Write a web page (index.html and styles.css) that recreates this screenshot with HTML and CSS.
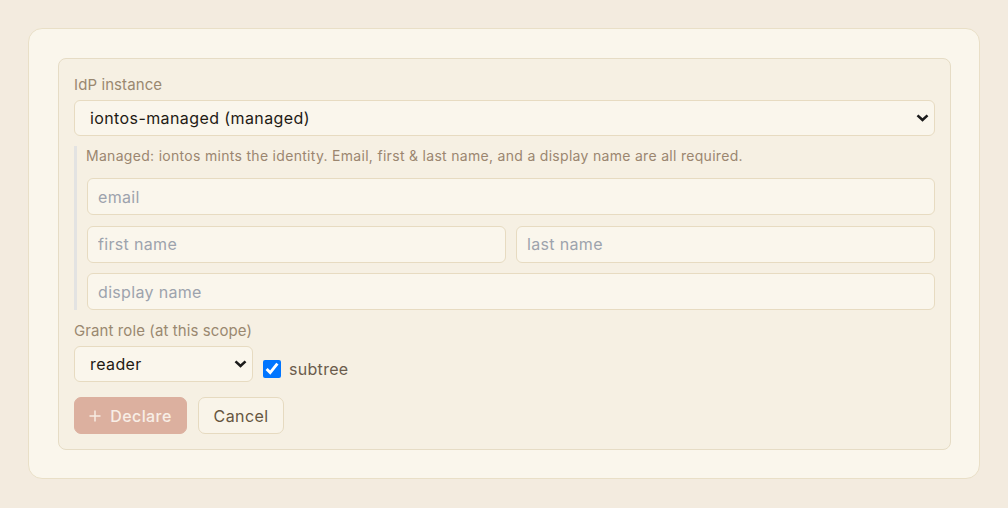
FILE: index.html
```html
<!DOCTYPE html>
<html lang="en">
<head>
<meta charset="utf-8">
<link rel="stylesheet" href="styles.css">
</head>
<body>
<div class="page">
  <div class="card">
    <div class="panel">
      <label class="label">IdP instance</label>
      <div class="select-wrap">
        <select class="select">
          <option>iontos-managed (managed)</option>
        </select>
        <svg class="chevron" width="13" height="8" viewBox="0 0 13 8" aria-hidden="true"><polyline points="1.5,1.4 6.5,6 11.5,1.4" fill="none" stroke="#1b1b1b" stroke-width="2.6"/></svg>
      </div>
      <div class="note">
        <p class="note-text">Managed: iontos mints the identity. Email, first &amp; last name, and a display name are all required.</p>
        <input class="input" type="text" placeholder="email">
        <div class="row">
          <input class="input" type="text" placeholder="first name">
          <input class="input" type="text" placeholder="last name">
        </div>
        <input class="input" type="text" placeholder="display name">
      </div>
      <label class="label label-role">Grant role (at this scope)</label>
      <div class="role-row">
        <div class="select-wrap select-wrap-role">
          <select class="select">
            <option>reader</option>
          </select>
          <svg class="chevron" width="13" height="8" viewBox="0 0 13 8" aria-hidden="true"><polyline points="1.5,1.4 6.5,6 11.5,1.4" fill="none" stroke="#1b1b1b" stroke-width="2.6"/></svg>
        </div>
        <label class="check"><input type="checkbox" checked> subtree</label>
      </div>
      <div class="actions">
        <button class="btn btn-primary" type="button"><svg class="plus" width="12" height="12" viewBox="0 0 12 12" aria-hidden="true"><path d="M6 0.5V11.5M0.5 6H11.5" stroke="#f7ece3" stroke-width="1.5" fill="none"/></svg>Declare</button>
        <button class="btn btn-secondary" type="button">Cancel</button>
      </div>
    </div>
  </div>
</div>
</body>
</html>
```
FILE: styles.css
```css
* { box-sizing: border-box; }
html, body { margin: 0; padding: 0; }
body {
  background: #f3ebdf;
  font-family: Inter, "Noto Sans", sans-serif;
  color: #1f1a14;
}
.page { padding: 28px; }
.card {
  background: #faf6ec;
  border: 1px solid #e9dfc7;
  border-radius: 14px;
  padding: 29px 28px 28px 29px;
}
.panel {
  background: #f6f0e3;
  border: 1px solid #e6dcc5;
  border-radius: 8px;
  padding: 16px 15px 15px 15px;
  display: flex;
  flex-direction: column;
}
.label {
  font-size: 15px;
  letter-spacing: 0.1px;
  line-height: 20px;
  color: #9a8870;
  margin-bottom: 5px;
}
.label-role { margin-top: 11px; }
.select-wrap { position: relative; height: 36px; }
.select-wrap-role { width: 179px; }
.select {
  -webkit-appearance: none;
  appearance: none;
  display: block;
  width: 100%;
  height: 36px;
  font-family: Inter, "Noto Sans", sans-serif;
  font-size: 16px;
  letter-spacing: 0.4px;
  color: #1f1a14;
  background: #faf6ec;
  border: 1px solid #e7dbc1;
  border-radius: 6px;
  padding: 0 30px 0 15px;
  outline: none;
}
.chevron { position: absolute; right: 6px; top: 14px; pointer-events: none; }
.note {
  margin-top: 10px;
  border-left: 3px solid #e3e3e2;
  padding-left: 10px;
  display: flex;
  flex-direction: column;
  gap: 10.5px;
}
.note-text {
  margin: 0 0 1.5px -1px;
  font-size: 14px;
  letter-spacing: 0.3px;
  line-height: 20px;
  color: #9b8670;
}
.input {
  display: block;
  font-family: Inter, "Noto Sans", sans-serif;
  font-size: 16px;
  letter-spacing: 0.33px;
  height: 37px;
  width: 100%;
  padding: 0 10px;
  background: #faf6ec;
  border: 1px solid #e7dbc1;
  border-radius: 6px;
  color: #1f1a14;
  outline: none;
}
.input::placeholder { color: #9da3ad; }
.row { display: flex; gap: 10px; }
.row .input { flex: 1; min-width: 0; }
.role-row { display: flex; align-items: center; gap: 10px; }
.check {
  display: flex;
  align-items: center;
  gap: 8px;
  font-size: 16px;
  letter-spacing: 0.3px;
  color: #6b5c4c;
  margin-top: 10px;
}
.check input { width: 18px; height: 18px; margin: 0; }
.actions { display: flex; gap: 11px; margin-top: 15px; }
.btn {
  display: flex;
  align-items: center;
  justify-content: center;
  font-family: Inter, "Noto Sans", sans-serif;
  font-size: 16px;
  font-weight: 400;
  letter-spacing: 0.4px;
  height: 37px;
  border-radius: 7px;
  padding: 0;
}
.btn-primary {
  background: #dcb09f;
  border: 1px solid #dcb09f;
  color: #f8eee6;
  width: 113px;
  gap: 9px;
  font-weight: 500;
}
.plus { display: block; }
.btn-secondary {
  background: #f9f4e9;
  border: 1px solid #e6dac0;
  color: #66563f;
  width: 86px;
}
```
